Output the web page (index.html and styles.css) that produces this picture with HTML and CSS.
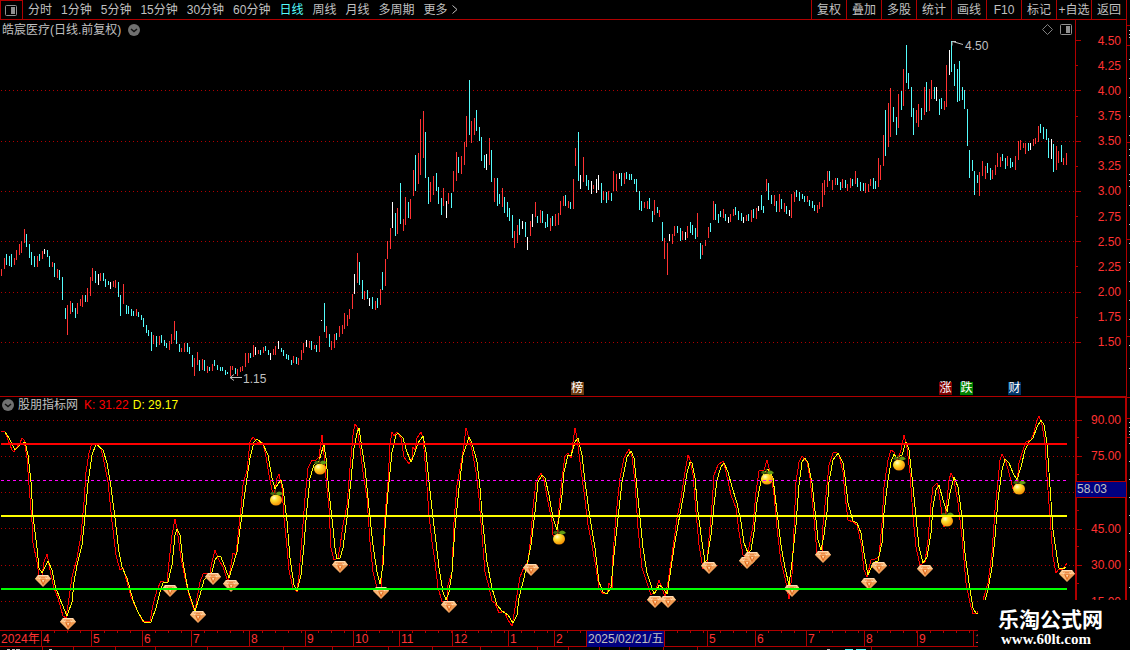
FILE: index.html
```html
<!DOCTYPE html>
<html lang="zh-CN">
<head>
<meta charset="utf-8">
<title>皓宸医疗 日线</title>
<link rel="stylesheet" href="styles.css">
</head>
<body>
<div class="terminal">
  <div class="main">
    <header class="toolbar">
      <button class="layout-toggle" aria-label="侧栏">
        <svg width="12" height="11" viewBox="0 0 12 11"><rect x=".5" y=".5" width="11" height="10" rx="1" fill="none" stroke="#909090"/><rect x="6" y="2" width="4" height="7" fill="#909090"/></svg>
      </button>
      <nav class="periods">
        <button>分时</button><button>1分钟</button><button>5分钟</button><button>15分钟</button><button>30分钟</button><button>60分钟</button><button class="active">日线</button><button>周线</button><button>月线</button><button>多周期</button><button class="more">更多<svg width="6" height="9" viewBox="0 0 6 9"><path d="M.5.5 5 4.500.5 8.500" fill="none" stroke="#c0c0c0"/></svg></button>
      </nav>
      <nav class="actions">
        <button>复权</button><button>叠加</button><button>多股</button><button>统计</button><button>画线</button><button>F10</button><button>标记</button><button>+自选</button><button>返回</button>
      </nav>
    </header>

    <section class="panel price">
      <div class="plot">
        <svg class="chart" viewBox="0 20 1075 376">
          <g id="price-grid" class="grid"></g>
          <g id="candles" shape-rendering="crispEdges"></g>
          <path class="pointer" d="M952 41.500H956M952 41.500V45.500M952.500 41.500 963 44.500"/>
          <text class="note" x="965" y="50">4.50</text>
          <path class="pointer" d="M230 377.500H242M230 377.500l4-3M230 377.500l4 3"/>
          <text class="note" x="243" y="383">1.15</text>
        </svg>
        <div class="caption">
          <span>皓宸医疗(日线.前复权)</span>
          <button class="drop" aria-label="展开"><svg width="12" height="12" viewBox="0 0 12 12"><circle cx="6" cy="6" r="6" fill="#707070"/><path d="M3 5l3 2.500L9 5" fill="none" stroke="#111" stroke-width="1.500"/></svg></button>
        </div>
        <div class="tools">
          <svg width="11" height="11" viewBox="0 0 11 11"><path d="M5.500.5l5 5-5 5-5-5z" fill="none" stroke="#808080"/></svg>
          <svg width="12" height="11" viewBox="0 0 12 11"><rect x=".5" y=".5" width="11" height="10" rx="1" fill="none" stroke="#909090"/><rect x="6" y="2" width="4" height="7" fill="#909090"/></svg>
        </div>
        <span class="tag rank">榜</span>
        <span class="tag rise">涨</span>
        <span class="tag fall">跌</span>
        <span class="tag report">财</span>
      </div>
      <ol class="scale">
        <li class="major">4.50</li><li>4.25</li><li class="major">4.00</li><li>3.75</li><li class="major">3.50</li><li>3.25</li><li class="major">3.00</li><li>2.75</li><li class="major">2.50</li><li>2.25</li><li class="major">2.00</li><li>1.75</li><li class="major">1.50</li>
      </ol>
    </section>

    <section class="panel indicator">
      <div class="plot">
        <svg class="chart" viewBox="0 397 1075 233">
          <defs>
            <g id="gem">
              <path d="M3 0H13L16 4 8 12 0 4z" fill="#f4a560"/>
              <path d="M3 0H13L16 4H0z" fill="#fbc68c"/>
              <path d="M4 1.500H12L11 3.500H5z" fill="#ec8c48"/>
              <path d="M5 4.500H11L8 11z" fill="#e06c22"/>
              <path d="M5 4.500 8 11 1 4.500z" fill="#f9b876"/>
              <path d="M11 4.500 8 11 15 4.500z" fill="#f09a50"/>
              <path d="M7 5H9.500L8 8z" fill="#ffd8a6"/>
              <path d="M3 .5H13M4 4 6 2.500M12 4 10 2.500" fill="none" stroke="#ffe4c4" stroke-opacity=".7"/>
            </g>
            <radialGradient id="peel" cx=".35" cy=".3" r=".75">
              <stop offset="0" stop-color="#fffbd0"/><stop offset=".35" stop-color="#ffe030"/><stop offset="1" stop-color="#f58a00"/>
            </radialGradient>
            <g id="fruit">
              <ellipse cx="6" cy="10" rx="6" ry="5.500" fill="url(#peel)"/>
              <path d="M6 5Q6 2 5 0" fill="none" stroke="#5a3a10" stroke-width="1.500"/>
              <path d="M5.500 3.500Q2 0 0 4 3 6 5.500 3.500z" fill="#3f6a10"/>
              <path d="M6 3.500Q9-.5 13 4 8 7 6 3.500z" fill="#5f9a14"/>
            </g>
          </defs>
          <g id="osc-grid" class="grid"></g>
          <polyline id="k-line" class="k-line"/>
          <polyline id="d-line" class="d-line"/>
          <g id="signals"></g>
          <path d="M1 480.500H1067" stroke="#ff00ff" stroke-dasharray="3 3"/>
          <path d="M1 444H1067" stroke="#ff0000" stroke-width="2"/>
          <path d="M1 516H1067" stroke="#ffff00" stroke-width="2"/>
          <path d="M1 589H1067" stroke="#00ff00" stroke-width="2"/>
        </svg>
        <div class="caption">
          <button class="drop" aria-label="展开"><svg width="12" height="12" viewBox="0 0 12 12"><circle cx="6" cy="6" r="6" fill="#707070"/><path d="M3 5l3 2.500L9 5" fill="none" stroke="#111" stroke-width="1.500"/></svg></button>
          <span>股朋指标网</span><span class="k-value">K: 31.22</span><span class="d-value">D: 29.17</span>
        </div>
      </div>
      <ol class="scale">
        <li class="major">90.00</li><li class="major">75.00</li><li class="major"></li><li class="major">45.00</li><li class="major">30.00</li><li class="major">15.00</li>
      </ol>
      <output class="cursor-value">58.03</output>
    </section>

    <footer class="dates">
      <span>2024年</span><span>4</span><span>5</span><span>6</span><span>7</span><span>8</span><span>9</span><span>10</span><span>11</span><span>12</span><span>1</span><span>2</span><time class="cursor-date">2025/02/21/五</time><span></span><span>5</span><span>6</span><span>7</span><span>8</span><span>9</span><span>10</span>
    </footer>
    <div class="strip">
      <svg viewBox="0 0 1126 3" preserveAspectRatio="none"><path d="M42.500 0V3M73.500 0V3M115.500 0V3M155.500 0V3M207.500 0V3M283.500 0V3M332.500 0V3M388.500 0V3M432.500 0V3M480.500 0V3M537.500 0V3M568.500 0V3M599.500 0V3M629.500 0V3M663.500 0V3M697.500 0V3M871.500 0V3" stroke="#b00000"/><path d="M7 2.500h3m2 0h3m1 0h4M49 2.500h3M827 2.500h3" stroke="#c0c0c0"/><path d="M845 2.500h8m3 0h10" stroke="#54fcfc"/></svg>
    </div>
  </div>
  <aside class="rail"><svg id="rail" width="3" height="650" viewBox="0 0 3 650"></svg></aside>
</div>
<div class="brand"><strong>乐淘公式网</strong><span>www.60lt.com</span></div>
<script src="chart.js"></script>
</body>
</html>
```
FILE: styles.css
```css
* { box-sizing: border-box; }
body {
  margin: 0;
  background: #000;
  color: #c0c0c0;
  font: 12px/14px "Liberation Sans", "Noto Sans CJK SC", sans-serif;
  position: relative;
  overflow: hidden;
}
button {
  margin: 0;
  padding: 0;
  border: 0;
  background: none;
  color: inherit;
  font: inherit;
  white-space: nowrap;
}
svg { display: block; }
.terminal { display: grid; grid-template-columns: minmax(0, 1fr) 3px; }
.main { border-right: 1px solid #b00000; }

.toolbar {
  display: flex;
  height: 20px;
  border-bottom: 1px solid #b00000;
}
.layout-toggle {
  display: flex;
  align-items: center;
  width: 23px;
  padding: 0 4px;
  border: solid #b00000;
  border-width: 1px 1px 0;
}
.periods { display: flex; gap: 9px; padding-left: 5px; }
.periods .active { color: #54fcfc; }
.periods .more { display: flex; align-items: center; gap: 4px; }
.actions { display: flex; margin-left: auto; }
.actions button { width: 35px; border-left: 1px solid #b00000; }

.panel {
  display: grid;
  grid-template-columns: minmax(0, 1fr) 51px;
  position: relative;
}
.price { border-bottom: 1px solid #b00000; }
.plot { position: relative; }
.chart { width: 100%; height: auto; }
.grid { stroke: #b00000; stroke-dasharray: 1 3; }
.pointer { fill: none; stroke: #c0c0c0; }
.note { fill: #c0c0c0; font-size: 12px; }
.k-line, .d-line { fill: none; stroke-width: 1; shape-rendering: crispEdges; }
.k-line { stroke: #ff0000; }
.d-line { stroke: #ffff00; }

.caption {
  position: absolute;
  top: 3px;
  left: 2px;
  display: flex;
  align-items: center;
  gap: 7px;
}
.indicator .caption { top: 1px; gap: 4px; }
.k-value { color: #ff0000; padding-left: 2px; }
.d-value { color: #ffff00; }
.tools { position: absolute; top: 4px; right: 3px; display: flex; gap: 7px; }

.tag {
  position: absolute;
  bottom: 1px;
  width: 13px;
  height: 13px;
  color: #fff;
  line-height: 13px;
  text-align: center;
}
.rank { left: 53.100%; background: #6b3a10; }
.rise { left: 87.350%; background: #800000; }
.fall { left: 89.300%; background: #008000; }
.report { left: 93.770%; background: #003468; }

.scale {
  margin: 0;
  list-style: none;
  display: grid;
  grid-auto-rows: 1fr;
  border-left: 1px solid #b00000;
  padding: 8px 5px 41px 0;
  color: #ff3232;
}
.scale li {
  display: flex;
  align-items: center;
  justify-content: space-between;
}
.scale li::before { content: ""; width: 2px; height: 1px; background: #b00000; }
.scale .major::before { width: 5px; }
.indicator .scale {
  border: 2px solid #b00000;
  border-width: 1px 1px 0 2px;
  padding: 4px 4px 10px 0;
}
.indicator .scale li { background: linear-gradient(#b00000, #b00000) 0 100% / 2px 1px no-repeat; }
.cursor-value {
  position: absolute;
  top: 36%;
  right: 0;
  width: 50px;
  height: 17px;
  padding: 0 1px;
  border: solid #b00000;
  border-width: 1px 0;
  background: #000080;
  line-height: 15px;
}

.dates {
  display: grid;
  grid-template-columns: 41fr 50fr 51fr 49fr 58fr 56fr 48fr 46fr 53fr 56fr 46fr 32fr 78fr 43fr 48fr 51fr 58fr 53fr 56fr 153fr;
  height: 17px;
  border: solid #b00000;
  border-width: 1px 0;
}
.dates > * {
  min-width: 0;
  padding-left: 1px;
  line-height: 16px;
  white-space: nowrap;
  color: #ff3232;
  border-left: 1px solid #b00000;
  background: repeating-linear-gradient(90deg, transparent 0 12px, #b00000 12px 13px) 0 0 / 100% 2px no-repeat;
}
.dates > :first-child { border-left: 0; background: none; }
.dates .cursor-date { color: #c0c0c0; background: #000080; }
.strip svg { width: 100%; height: 3px; }

.brand {
  position: absolute;
  right: 0;
  bottom: 0;
  width: 152px;
  height: 50px;
  padding: 7px 0 0 20px;
  background: #000;
  color: #fff;
  display: flex;
  flex-direction: column;
}
.brand strong { font: bold 21px/22px "Noto Sans CJK SC", sans-serif; }
.brand span { padding-left: 3px; font: bold 15px/20px "Liberation Serif", serif; }
```
FILE: chart.js
```js
const NS = "http://www.w3.org/2000/svg";

function add(parent, name, attrs) {
  const el = document.createElementNS(NS, name);
  for (const key in attrs) el.setAttribute(key, attrs[key]);
  document.getElementById(parent).appendChild(el);
}

// Bars: x, high, low, direction (r up, c down, w flat)
const bars = `
1 269 276 r;4 258 269 r;6 254 265 c;9 256 266 c;11 254 267 c;14 258 265 r;16 250 260 r;19 244 255 r;21 241 253 r;24 229 243 r
26 234 247 c;29 244 258 c;31 252 265 c;34 256 267 c;37 256 267 r;39 254 261 c;42 251 259 r;44 249 254 w;47 250 257 c;49 256 267 c
52 262 267 r;54 263 277 c;57 269 278 r;59 270 280 c;62 277 300 c;65 308 319 c;67 305 335 r;70 301 314 r;72 303 312 c;75 308 318 c
77 303 314 r;80 299 306 r;82 295 307 r;85 295 302 c;87 288 302 r;90 277 296 r;92 268 281 r;95 271 283 c;98 274 285 w;100 273 281 r
103 273 281 c;105 279 287 c;108 281 285 c;110 282 289 w;113 281 287 r;115 280 288 r;118 282 297 c;120 295 316 c;123 284 304 r;126 305 314 c
128 306 314 c;131 309 316 c;133 311 316 c;136 309 316 r;138 312 317 c;141 315 320 c;143 318 327 c;146 325 333 c;148 330 336 c;151 332 351 c
153 335 344 r;156 336 347 c;159 336 345 r;161 335 343 c;164 340 346 c;166 343 348 c;169 341 350 r;171 334 344 r;174 321 340 r;176 331 344 c
179 344 352 c;181 348 352 r;184 343 352 r;187 343 352 c;189 347 354 c;192 355 367 c;194 358 376 r;197 352 365 r;199 360 371 c;202 359 370 r
204 360 371 c;207 366 373 r;209 367 371 c;212 364 371 r;214 360 366 c;217 365 370 c;220 367 371 c;222 367 371 c;225 370 375 c;227 372 374 c
230 366 376 r;232 366 370 r;235 368 374 c;237 369 376 r;240 367 372 r;242 366 371 r;245 353 367 r;248 353 363 r;250 353 358 c;253 345 357 r
255 347 355 w;258 350 354 r;260 350 355 c;263 347 353 r;265 346 351 c;268 350 355 c;270 353 360 w;273 349 355 r;275 346 355 r;278 341 349 w
281 348 352 c;283 350 356 c;286 354 359 c;288 355 360 c;291 360 365 c;293 356 363 r;296 357 364 c;298 358 365 r;301 350 360 r;303 343 353 r
306 340 347 w;309 341 348 r;311 341 350 c;314 345 349 r;316 345 352 c;319 336 352 r;321 320 321 w;324 303 332 c;326 326 338 r;329 334 347 c
331 341 350 r;334 334 348 r;336 333 340 c;339 326 337 r;342 325 334 r;344 313 329 r;347 315 326 r;349 309 319 r;352 294 309 r;354 274 294 w
357 253 283 r;359 262 285 c;362 280 299 c;364 291 300 r;367 290 299 c;369 298 306 w;372 297 309 c;375 301 310 r;377 298 308 c;380 289 305 r
382 272 290 c;385 259 286 r;387 241 259 r;390 228 249 r;392 202 228 w;395 213 236 c;397 208 234 r;400 183 224 c;403 219 231 r;405 197 225 r
408 202 218 c;410 199 219 r;413 170 196 r;415 155 191 c;418 153 184 r;420 119 175 r;423 111 158 r;425 132 178 c;428 177 204 c;430 182 202 r
433 176 195 r;436 173 191 c;438 187 204 c;441 198 215 c;443 188 206 r;446 201 218 w;448 193 204 r;451 193 208 c;453 171 192 r;456 152 181 r
458 157 173 c;461 156 174 r;464 142 165 r;466 116 147 r;469 80 135 c;471 121 143 r;474 118 135 r;476 110 131 c;479 127 141 c;481 137 161 c
484 155 168 c;486 154 170 w;489 138 165 r;491 150 182 c;494 178 202 r;497 178 206 c;499 194 204 c;502 188 207 r;504 197 213 c;507 202 217 c
509 208 221 c;512 215 238 c;514 231 248 r;517 225 243 r;519 219 235 c;522 221 229 w;525 222 237 c;527 237 250 w;530 221 236 r;532 214 227 w
535 202 217 r;537 216 223 c;540 210 223 r;542 211 223 c;545 222 228 c;547 214 227 c;550 218 231 r;552 216 226 c;555 214 226 r;558 213 225 r
560 201 215 r;563 196 206 r;565 195 206 c;568 201 208 r;570 202 209 c;573 179 209 r;575 148 166 r;578 132 181 c;580 175 189 w;583 157 182 r
586 175 186 c;588 180 190 c;591 181 194 w;593 185 189 r;596 179 193 w;598 175 190 w;601 183 203 c;603 191 200 r;606 192 203 c;608 191 200 r
611 193 201 c;613 171 191 r;616 174 191 r;619 173 179 w;621 173 186 c;624 173 184 r;626 172 179 c;629 174 180 c;631 174 180 c;634 179 184 c
636 179 192 c;639 191 210 c;641 201 211 c;644 202 208 r;647 201 209 r;649 198 209 c;652 211 222 c;654 200 215 r;657 207 213 c;659 210 217 r
662 222 241 c;664 238 259 r;667 243 275 r;669 234 241 w;672 234 244 r;674 226 236 r;677 226 233 c;680 228 241 c;682 231 240 r;685 232 240 w
687 226 238 r;690 222 233 c;692 225 235 c;695 228 239 c;697 213 237 r;700 243 259 c;702 245 255 r;705 240 246 r;708 227 238 r;710 223 232 c
713 201 220 r;715 204 220 c;718 214 223 c;720 211 217 c;723 209 218 r;725 214 221 c;728 217 223 w;730 214 222 r;733 209 216 r;735 207 215 c
738 211 220 c;741 213 221 c;743 217 223 w;746 215 221 r;748 214 221 c;751 210 222 r;753 209 218 c;756 208 219 r;758 206 211 w;761 195 210 c
763 206 213 c;766 179 191 r;768 183 200 c;771 195 204 c;774 195 206 r;776 201 212 c;779 194 212 r;781 199 209 c;784 203 212 r;786 206 214 c
789 210 216 w;791 194 218 r;794 192 202 r;796 190 197 c;799 192 201 c;802 194 199 c;804 196 202 c;807 196 202 r;809 200 206 c;812 201 208 c
814 205 211 c;817 205 213 r;819 202 209 r;822 183 207 r;824 180 195 r;827 171 187 r;829 171 181 c;832 180 190 r;835 178 185 r;837 178 185 c
840 182 190 c;842 179 188 r;845 180 188 c;847 184 191 r;850 178 188 r;852 179 186 c;855 171 184 r;857 178 187 c;860 182 191 c;863 183 191 c
865 183 193 r;868 184 192 r;870 179 186 r;873 178 189 c;875 181 189 c;878 158 187 r;880 165 180 r;883 135 166 r;885 110 156 c;888 103 147 r
890 88 137 r;893 107 122 c;896 117 135 c;898 94 128 r;901 91 110 c;903 69 106 r;906 45 83 c;908 73 89 c;911 87 117 c;913 108 135 c
916 110 123 r;918 104 127 r;921 108 120 c;924 87 115 r;926 82 112 c;929 89 111 r;931 80 99 r;934 87 99 c;936 87 101 w;939 99 115 c
941 98 109 c;944 101 110 r;946 65 107 r;949 50 75 w;951 41 72 c;954 64 86 c;957 69 102 c;959 61 101 c;962 87 100 c;964 90 109 c
967 109 146 c;969 150 178 c;972 160 171 c;974 171 195 c;977 175 183 c;979 172 196 r;982 161 176 r;985 166 179 r;987 163 173 c;990 168 180 c
992 170 179 r;995 165 175 r;997 153 167 r;1000 157 167 r;1002 154 161 c;1005 158 169 c;1007 156 166 r;1010 158 168 c;1012 162 167 c;1015 156 170 r
1018 141 160 r;1020 140 150 r;1023 143 148 r;1025 143 154 r;1028 143 151 c;1030 143 150 w;1033 139 146 r;1035 138 144 r;1038 126 142 r;1040 124 133 c
1043 127 139 c;1046 129 140 c;1048 138 158 c;1051 139 159 w;1053 144 172 c;1056 146 170 r;1058 151 163 r;1061 145 162 c;1063 158 165 r;1066 153 165 r`;
const barColor = { r: "#ff3232", c: "#54fcfc", w: "#ffffff" };

for (const bar of bars.trim().split(/[;\n]/)) {
  const [x, top, bottom, dir] = bar.split(" ");
  add("candles", "rect", { x, y: top, width: 1, height: bottom - top, fill: barColor[dir] });
}

for (const y of [90, 141, 191, 241, 292, 342]) add("price-grid", "path", { d: `M1 ${y + 0.5}H1075` });
for (const y of [420, 456, 492, 528, 565, 601]) add("osc-grid", "path", { d: `M1 ${y + 0.5}H1075` });

const k = `1,431 5,432 8,440 12,450 14,452 17,447 20,443 22,438 24,440 27,458 29,485 32,522 33,543 37,562 39,575 42,577 44,562 47,554 50,570 54,588 58,598 63,616 66,618 69,598 72,577 77,558 81,535 84,502 86,472 89,453 92,443 97,445 101,448 104,462 108,482 112,522 116,555 120,570 123,568 127,582 131,597 137,610 143,622 150,621 153,605 157,590 161,581 167,583 169,562 172,535 175,519 177,528 181,558 185,578 189,595 195,613 197,598 200,582 203,574 210,573 212,562 215,550 218,558 223,567 228,582 231,565 233,553 236,555 238,535 241,508 243,485 247,470 250,442 253,437 257,442 263,443 266,457 269,475 273,495 275,490 277,478 279,474 282,488 284,518 287,548 289,570 293,588 297,592 299,575 302,538 305,498 308,468 312,460 316,460 319,457 322,435 323,443 326,478 329,508 331,548 334,560 338,558 340,547 343,525 347,505 350,468 353,435 355,424 357,427 360,448 363,472 367,498 370,542 373,572 377,588 381,587 383,555 385,515 388,482 390,445 392,432 394,436 397,432 401,438 404,457 409,464 412,458 413,447 415,450 417,438 421,432 423,438 426,472 429,515 432,542 435,562 438,588 442,601 447,602 448,585 452,572 454,522 457,485 462,458 464,445 466,428 469,438 472,450 476,472 479,498 482,535 485,572 489,587 492,601 495,603 499,613 504,611 508,620 512,626 515,608 517,595 520,577 524,567 528,562 531,535 533,508 536,482 541,473 544,480 548,502 552,522 553,535 557,535 559,508 562,478 565,456 568,453 571,458 573,442 575,428 577,438 580,462 584,492 588,525 592,545 596,568 599,588 603,594 607,593 609,583 612,588 613,555 616,515 620,478 624,458 629,449 632,457 635,482 638,528 642,568 647,583 651,595 655,592 659,580 662,588 665,597 668,582 672,555 677,518 681,498 684,478 688,455 690,460 693,475 696,512 699,545 703,569 707,562 709,538 712,505 714,475 718,465 723,461 726,472 731,495 736,508 739,532 743,555 747,558 750,542 753,525 756,492 759,471 764,470 767,460 771,475 774,495 777,528 781,562 785,578 789,599 792,575 794,528 796,482 799,462 802,456 807,462 810,478 813,508 817,553 822,552 823,525 826,495 829,465 833,453 836,452 839,455 843,472 845,495 848,520 853,522 857,525 861,543 864,570 867,577 871,560 875,559 879,557 882,523 884,487 888,460 891,450 894,452 897,462 901,450 904,435 907,448 910,473 913,517 916,547 920,565 925,562 928,540 931,503 933,487 937,483 940,500 944,527 947,500 949,480 951,473 954,480 958,503 962,537 966,583 970,603 973,614 977,613 983,600 988,583 992,553 995,510 998,480 1000,460 1002,454 1006,462 1009,473 1013,489 1017,483 1019,463 1023,450 1026,442 1031,440 1034,432 1037,420 1039,416 1042,425 1045,443 1047,477 1050,517 1053,557 1056,573 1059,569 1063,569 1067,563`;
const d = `5,432 9,438 15,450 20,445 25,442 28,455 31,482 33,516 37,548 39,568 42,573 45,567 48,561 52,570 55,585 60,599 67,616 72,602 74,582 77,565 82,545 85,516 88,483 92,455 96,444 103,450 107,463 111,487 115,518 119,552 122,567 127,578 133,600 138,612 144,622 151,622 156,608 160,592 163,583 168,582 172,565 175,535 177,529 180,535 183,562 188,590 195,611 200,595 204,580 212,572 215,560 218,556 221,557 226,570 229,578 233,565 237,552 241,522 245,492 250,458 254,442 257,439 263,444 268,455 272,478 275,489 278,484 281,480 283,488 287,521 290,558 294,585 297,591 301,575 304,545 307,508 310,478 314,465 319,461 323,447 324,445 326,458 329,492 333,528 335,548 337,559 340,558 343,548 347,518 351,480 354,448 357,433 359,428 361,442 365,468 369,508 373,545 377,572 380,584 383,565 385,528 388,492 392,452 396,435 398,433 403,438 407,452 411,462 414,455 418,443 423,436 426,452 429,482 433,518 436,542 439,568 443,592 446,600 449,592 452,572 455,528 459,488 463,455 467,443 469,437 472,443 477,462 480,488 483,525 487,562 492,588 497,605 502,611 508,615 513,623 517,615 519,598 523,582 527,565 531,545 535,512 538,482 542,475 545,478 549,495 553,518 557,530 559,518 562,495 564,472 568,455 571,456 575,442 578,438 582,455 585,482 590,518 595,548 599,582 603,592 607,594 611,587 614,555 618,518 622,482 627,457 631,451 634,458 638,498 643,548 647,573 652,588 654,594 657,590 659,585 662,587 667,594 670,575 674,548 678,525 683,498 687,473 690,462 692,463 695,478 698,512 702,542 705,562 707,560 711,535 714,505 717,480 721,467 724,463 728,472 732,487 737,503 741,522 744,543 748,553 751,550 754,532 757,502 761,481 764,473 768,469 773,478 777,512 781,545 785,568 789,585 792,562 796,525 799,485 802,462 805,458 808,463 812,483 816,520 818,540 821,550 824,535 827,512 829,482 833,460 838,453 843,463 845,477 848,503 853,521 857,523 861,533 864,553 868,575 873,563 878,561 882,543 884,513 888,480 891,462 894,454 897,458 902,455 906,442 909,450 912,477 916,517 919,547 923,563 927,557 931,533 933,507 936,490 939,485 943,500 947,512 950,493 954,477 958,487 962,517 965,553 970,590 973,608 976,613 978,613 981,611 985,600 988,590 992,567 995,537 998,500 1002,470 1005,459 1009,463 1013,473 1017,480 1021,467 1025,450 1029,442 1033,438 1037,427 1041,420 1044,425 1047,443 1050,487 1053,530 1057,557 1059,568 1063,569 1066,567`;
document.getElementById("k-line").setAttribute("points", k);
document.getElementById("d-line").setAttribute("points", d);

const gems = [[35,575],[60,618],[162,585],[190,611],[205,573],[223,580],[332,561],[373,587],[441,601],[523,564],[647,596],[660,596],[701,562],[739,557],[744,552],[784,585],[815,551],[861,578],[871,562],[917,565],[1059,570]];
const fruits = [[270,490],[314,459],[553,529],[761,469],[893,455],[941,511],[1013,479]];
for (const [x, y] of gems) add("signals", "use", { href: "#gem", x, y });
for (const [x, y] of fruits) add("signals", "use", { href: "#fruit", x, y });

for (const y of [25, 45, 142, 239, 336, 397, 418, 437]) add("rail", "rect", { x: 0, y, width: 3, height: 1, fill: "#b00000" });
for (const y of [30, 34, 37, 59, 78, 97, 116, 135, 149, 155, 174, 180, 186, 205, 224, 243, 262, 281, 300, 319, 345, 368, 422, 427, 431, 434, 443, 461, 479, 497, 515, 533, 551, 569, 587]) add("rail", "rect", { x: 2, y, width: 1, height: 1, fill: "#c0c0c0" });
```
